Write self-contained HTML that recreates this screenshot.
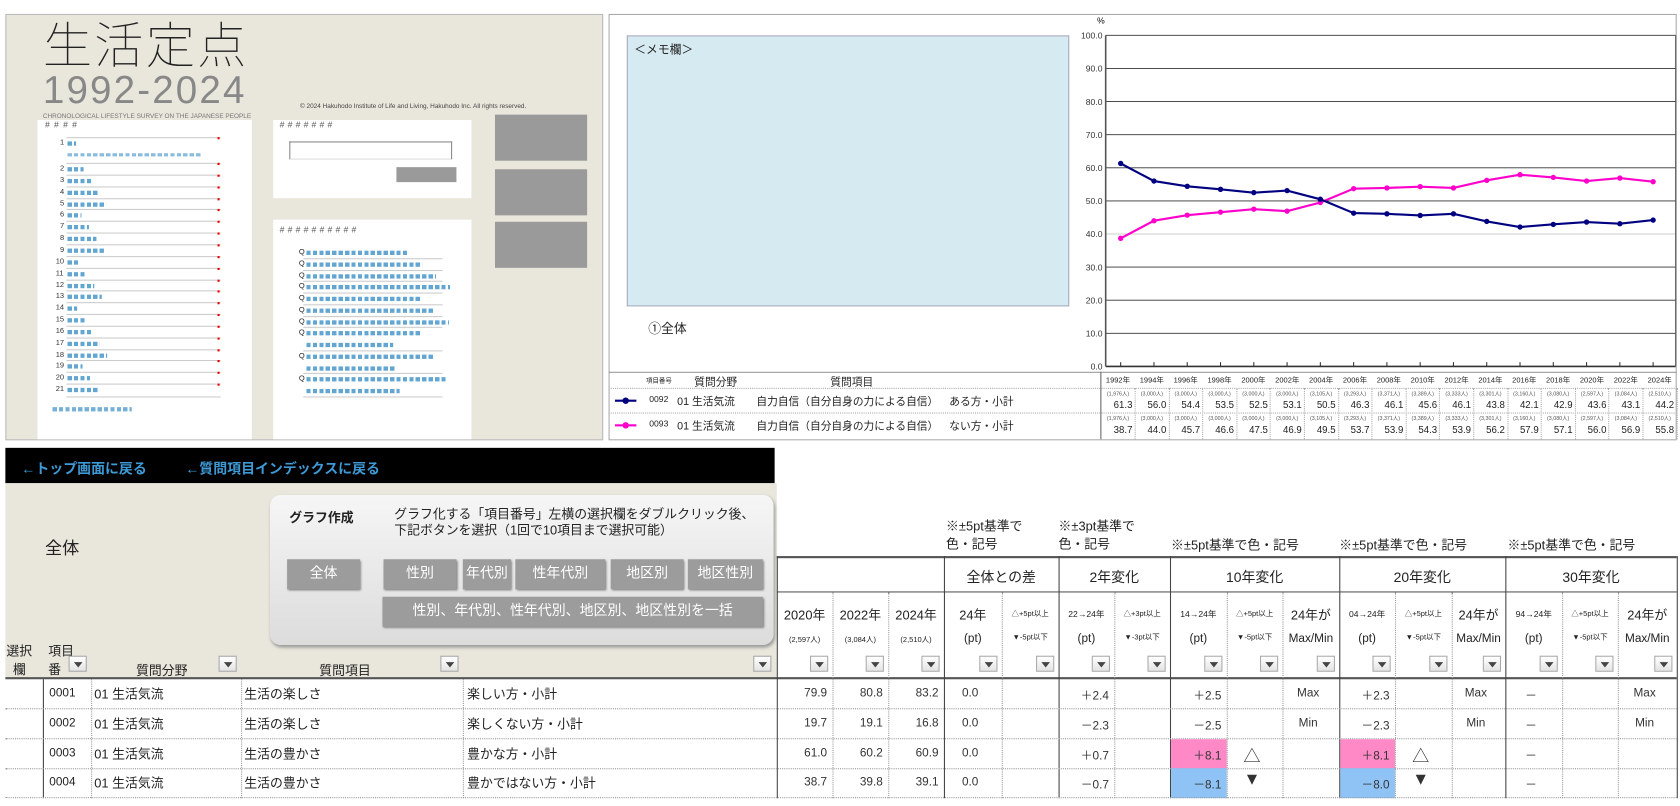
<!DOCTYPE html>
<html><head><meta charset="utf-8">
<style>
*{margin:0;padding:0;box-sizing:border-box}
html,body{width:1680px;height:806px;overflow:hidden;background:#fff}
body{font-family:"Liberation Sans","Noto Sans CJK JP",sans-serif;color:#222}
#w{position:absolute;left:0;top:0;width:1568px;height:752px;transform:scale(1.0714);transform-origin:0 0}
.a{position:absolute}
.bl{background:repeating-linear-gradient(90deg,#3b8fc7 0 4px,transparent 4px 6px)}
.dd{position:absolute;width:17px;height:15px;border:1px solid #aaa;background:linear-gradient(#fff,#e4e4e4)}
.dd:after{content:"";position:absolute;left:4px;top:5px;border-left:4px solid transparent;border-right:4px solid transparent;border-top:5px solid #444}
.btn{position:absolute;background:#9c9c9c;color:#fff;font-size:13px;text-align:center;line-height:26px;height:28px;box-shadow:1px 1px 2px #777}
.t{position:absolute;font-size:12px;white-space:nowrap}
.sm{font-size:8px}
</style></head><body><div id="w">

<div class="a" style="left:5px;top:13px;width:558px;height:398px;background:#e9e6dc;border:1px solid #bbb"></div>
<div class="a" style="left:40px;top:14px;font-size:46px;font-weight:100;letter-spacing:2px;color:#222;font-family:'Noto Sans CJK JP',sans-serif;line-height:52px">生活定点</div>
<div class="a" style="left:40px;top:64px;font-size:36px;color:#888;letter-spacing:2px;font-weight:100;line-height:40px">1992-2024</div>
<div class="a" style="left:40px;top:106px;font-size:6px;color:#777">CHRONOLOGICAL LIFESTYLE SURVEY ON THE JAPANESE PEOPLE</div>
<div class="a" style="left:280px;top:97px;font-size:6px;color:#444">© 2024 Hakuhodo Institute of Life and Living, Hakuhodo Inc. All rights reserved.</div>
<div class="a" style="left:35px;top:112px;width:200px;height:298px;background:#fff"></div>
<div class="a" style="left:255px;top:112px;width:185px;height:73px;background:#fff"></div>
<div class="a" style="left:270px;top:132px;width:152px;height:17px;border:1px solid #888;border-bottom-color:#ddd;background:#fff"></div>
<div class="a" style="left:370px;top:156px;width:56px;height:14px;background:#9a9a9a"></div>
<div class="a" style="left:255px;top:205px;width:185px;height:205px;background:#fff"></div>
<div class="a" style="left:462px;top:107px;width:86px;height:43px;background:#9a9a9a"></div>
<div class="a" style="left:462px;top:158px;width:86px;height:43px;background:#9a9a9a"></div>
<div class="a" style="left:462px;top:207px;width:86px;height:43px;background:#9a9a9a"></div>
<div class="t sm" style="left:42px;top:112px;color:#555;letter-spacing:4px">####</div>
<div class="t sm" style="left:261px;top:112px;color:#555;letter-spacing:3px">#######</div>
<div class="t sm" style="left:261px;top:210px;color:#555;letter-spacing:3px">##########</div>
<div class="a bl" style="left:49px;top:380px;width:74px;height:4px;opacity:.7"></div>

<div class="a" style="left:568px;top:13px;width:997px;height:398px;background:#fff;border:1px solid #aaa"></div>
<div class="a" style="left:585px;top:33px;width:413px;height:253px;background:#d6eaf1;border:1px solid #aab"></div>
<div class="t" style="left:592px;top:38px;font-size:11px">＜メモ欄＞</div>
<div class="t" style="left:605px;top:298px;font-size:12px">①全体</div>
<div class="a" style="left:568px;top:347px;width:997px;height:1px;background:#999"></div>
<div class="a" style="left:1027px;top:347px;width:1px;height:63px;background:#666"></div>
<div class="t" style="left:603px;top:350px;font-size:6px">項目番号</div>
<div class="t" style="left:648px;top:348px;font-size:10px">質問分野</div>
<div class="t" style="left:775px;top:348px;font-size:10px">質問項目</div>
<div class="a" style="left:568px;top:362px;width:997px;height:1px;border-top:1px dotted #aaa"></div>
<div class="a" style="left:568px;top:385px;width:997px;height:1px;border-top:1px dotted #aaa"></div>
<div class="a" style="left:574px;top:373px;width:20px;height:2px;background:#000080"></div><div class="a" style="left:581px;top:371px;width:6px;height:6px;border-radius:3px;background:#000080"></div>
<div class="a" style="left:574px;top:396px;width:20px;height:2px;background:#ff00cc"></div><div class="a" style="left:581px;top:394px;width:6px;height:6px;border-radius:3px;background:#ff00cc"></div>
<div class="t" style="left:606px;top:368px;font-size:8px">0092</div><div class="t" style="left:632px;top:366px;font-size:10px">01 生活気流</div><div class="t" style="left:706px;top:366px;font-size:10px">自力自信（自分自身の力による自信）</div><div class="t" style="left:886px;top:366px;font-size:10px">ある方・小計</div>
<div class="t" style="left:606px;top:391px;font-size:8px">0093</div><div class="t" style="left:632px;top:389px;font-size:10px">01 生活気流</div><div class="t" style="left:706px;top:389px;font-size:10px">自力自信（自分自身の力による自信）</div><div class="t" style="left:886px;top:389px;font-size:10px">ない方・小計</div>

<div class="a" style="left:5px;top:418px;width:718px;height:33px;background:#000"></div>
<div class="t" style="left:20px;top:427px;font-size:13px;font-weight:bold;color:#3d9ad6">←トップ画面に戻る</div>
<div class="t" style="left:173px;top:427px;font-size:13px;font-weight:bold;color:#3d9ad6">←質問項目インデックスに戻る</div>
<div class="a" style="left:5px;top:451px;width:720px;height:181px;background:#e9e6dc"></div>
<div class="t" style="left:42px;top:498px;font-size:16px">全体</div>
<div class="a" style="left:252px;top:462px;width:470px;height:140px;border-radius:10px;background:linear-gradient(#f6f6f6,#dcdcdc);box-shadow:1px 2px 3px #999"></div>
<div class="t" style="left:270px;top:474px;font-size:12px;font-weight:bold">グラフ作成</div>
<div class="t" style="left:368px;top:473px;font-size:12px;line-height:15px">グラフ化する「項目番号」左横の選択欄をダブルクリック後、<br>下記ボタンを選択（1回で10項目まで選択可能）</div>
<div class="btn" style="left:268px;top:522px;width:68px">全体</div>
<div class="btn" style="left:358px;top:522px;width:68px">性別</div>
<div class="btn" style="left:432px;top:522px;width:45px">年代別</div>
<div class="btn" style="left:481px;top:522px;width:84px">性年代別</div>
<div class="btn" style="left:570px;top:522px;width:68px">地区別</div>
<div class="btn" style="left:642px;top:522px;width:70px">地区性別</div>
<div class="btn" style="left:357px;top:557px;width:355px">性別、年代別、性年代別、地区別、地区性別を一括</div>
<div class="t" style="left:6px;top:600px;font-size:12px;line-height:17px;text-align:center">選択<br>欄</div>
<div class="t" style="left:45px;top:600px;font-size:12px;line-height:17px">項目<br>番</div>
<div class="t" style="left:127px;top:617px;font-size:12px">質問分野</div>
<div class="t" style="left:298px;top:617px;font-size:12px">質問項目</div>
<div class="dd" style="left:64px;top:612px"></div>
<div class="dd" style="left:204px;top:612px"></div>
<div class="dd" style="left:411px;top:612px"></div>
<div class="dd" style="left:703px;top:612px"></div>
<div class="t" style="left:883px;top:483px;font-size:12px;line-height:17px">※±5pt基準で<br>色・記号</div>
<div class="t" style="left:988px;top:483px;font-size:12px;line-height:17px">※±3pt基準で<br>色・記号</div>
<div class="t" style="left:1093px;top:500px;font-size:12px">※±5pt基準で色・記号</div>
<div class="t" style="left:1250px;top:500px;font-size:12px">※±5pt基準で色・記号</div>
<div class="t" style="left:1407px;top:500px;font-size:12px">※±5pt基準で色・記号</div>
</div>
<script>
var W=document.getElementById('w');
function add(h){W.insertAdjacentHTML('beforeend',h)}
var h='';for(var i=0;i<21;i++){var y=i==0?131:155+(i-1)*10.85;h+='<div class="a" style="left:62px;top:'+(y-3)+'px;width:144px;height:1px;background:#ccc"></div><div class="a" style="left:203px;top:'+(y-3)+'px;width:2px;height:2px;background:#e00"></div><div class="t" style="left:'+(i<9?56:52)+'px;top:'+(y-1)+'px;font-size:7px;color:#333">'+(i+1)+'</div><div class="a bl" style="left:63px;top:'+(y+1)+'px;width:'+(8+(i*7)%30)+'px;height:4px;opacity:.8"></div>'}
h+='<div class="a bl" style="left:63px;top:143px;width:125px;height:3px;opacity:.6"></div><div class="a" style="left:62px;top:370px;width:144px;height:1px;background:#ccc"></div>';
var q=[1,1,1,1,1,1,1,2,2,2];var yy=233;for(i=0;i<10;i++){h+='<div class="t" style="left:279px;top:'+(yy-1)+'px;font-size:7px">Q</div>';for(var k=0;k<q[i];k++){h+='<div class="a bl" style="left:286px;top:'+(yy+1+k*10.75)+'px;width:'+(k?60+i*3:95+(i*13)%40)+'px;height:4px;opacity:.8"></div>'}yy+=q[i]*10.75;h+='<div class="a" style="left:283px;top:'+(yy-3)+'px;width:130px;height:1px;background:#ccc"></div>';}
add(h);
var b=[61.3,56.0,54.4,53.5,52.5,53.1,50.5,46.3,46.1,45.6,46.1,43.8,42.1,42.9,43.6,43.1,44.2],p=[38.7,44.0,45.7,46.6,47.5,46.9,49.5,53.7,53.9,54.3,53.9,56.2,57.9,57.1,56.0,56.9,55.8];
var X0=1032,Y0=342,sc=3.09,s='<svg class="a" style="left:0;top:0" width="1568" height="752">';
for(var v=0;v<=100;v+=10){var y=Y0-v*sc;s+='<line x1="'+X0+'" x2="1564" y1="'+y+'" y2="'+y+'" stroke="'+(v==40?'#bbb':'#333')+'" stroke-width="'+(v==0?1.5:0.8)+'"/><text x="'+(X0-3)+'" y="'+(y+3)+'" font-size="8" text-anchor="end" fill="#333">'+v.toFixed(1)+'</text>'}
s+='<line x1="'+X0+'" x2="'+X0+'" y1="'+(Y0-309)+'" y2="'+Y0+'" stroke="#555" stroke-width="1.5"/><line x1="1564" x2="1564" y1="33" y2="342" stroke="#555"/><text x="1024" y="22" font-size="8">%</text>';
function pl(d,c){var pts=d.map(function(v,i){return (1046+i*31.06).toFixed(1)+','+(Y0-v*sc).toFixed(1)}).join(' ');var r='<polyline points="'+pts+'" fill="none" stroke="'+c+'" stroke-width="2"/>';d.forEach(function(v,i){r+='<circle cx="'+(1046+i*31.06)+'" cy="'+(Y0-v*sc)+'" r="2.5" fill="'+c+'"/>'});return r}
s+=pl(p,'#ff00cc')+pl(b,'#000080');
for(i=0;i<17;i++){var x=1046+i*31.06;s+='<line x1="'+x+'" x2="'+x+'" y1="'+(Y0-4)+'" y2="'+Y0+'" stroke="#333"/>'}
s+='</svg>';add(s);
h='';var n=[1976,3000,3000,3000,3000,3000,3105,3293,3371,3389,3333,3301,3160,3080,2597,3084,2510];
for(i=0;i<17;i++){var x=1028+i*31.6;h+='<div class="t" style="left:'+x+'px;top:350px;font-size:7px;width:31px;text-align:center">'+(1992+2*i)+'年</div><div class="t" style="left:'+x+'px;top:364px;font-size:5px;width:31px;text-align:center;color:#555">('+n[i].toLocaleString()+'人)</div><div class="t" style="left:'+x+'px;top:373px;font-size:9px;width:29px;text-align:right">'+b[i].toFixed(1)+'</div><div class="t" style="left:'+x+'px;top:387px;font-size:5px;width:31px;text-align:center;color:#555">('+n[i].toLocaleString()+'人)</div><div class="t" style="left:'+x+'px;top:396px;font-size:9px;width:29px;text-align:right">'+p[i].toFixed(1)+'</div><div class="a" style="left:'+(x+31)+'px;top:362px;width:1px;height:48px;border-left:1px dotted #aaa"></div>'}
add(h);
var cx=[725,777,829,881,935,988,1040,1092,1145,1197,1250,1302,1355,1405,1458,1510,1565];
h='<div class="a" style="left:725px;top:519px;width:840px;height:2px;background:#555"></div><div class="a" style="left:725px;top:552px;width:840px;height:1px;background:#555"></div><div class="a" style="left:5px;top:632px;width:1560px;height:2px;background:#555"></div>';
[725,881,988,1092,1250,1405,1565].forEach(function(x){h+='<div class="a" style="left:'+x+'px;top:519px;width:1px;height:226px;background:#444"></div>'});
for(i=1;i<16;i++){if([3,5,7,10,13].indexOf(i)<0)h+='<div class="a" style="left:'+cx[i]+'px;top:553px;width:1px;height:192px;border-left:1px dotted #999"></div>';}
[[881,988,'全体との差'],[988,1092,'2年変化'],[1092,1250,'10年変化'],[1250,1405,'20年変化'],[1405,1565,'30年変化']].forEach(function(g){h+='<div class="t" style="left:'+g[0]+'px;width:'+(g[1]-g[0])+'px;text-align:center;top:528px;font-size:13px">'+g[2]+'</div>'});
var t1=['2020年','2022年','2024年','24年','△+5pt以上','22→24年','△+3pt以上','14→24年','△+5pt以上','24年が','04→24年','△+5pt以上','24年が','94→24年','△+5pt以上','24年が'];
var t2=['(2,597人)','(3,084人)','(2,510人)','(pt)','▼-5pt以下','(pt)','▼-3pt以下','(pt)','▼-5pt以下','Max/Min','(pt)','▼-5pt以下','Max/Min','(pt)','▼-5pt以下','Max/Min'];
for(i=0;i<16;i++){var w=cx[i+1]-cx[i],big=/^(20|24)/.test(t1[i]);h+='<div class="t" style="left:'+cx[i]+'px;width:'+w+'px;text-align:center;top:'+(big?565:568)+'px;font-size:'+(big?12:(t1[i][0]=='△'?7:8))+'px;overflow:hidden">'+t1[i]+'</div>';var s2=t2[i];h+='<div class="t" style="left:'+cx[i]+'px;width:'+w+'px;text-align:center;top:'+(s2[0]=='('&&s2.length>4?592:590)+'px;font-size:'+(s2=='Max/Min'?11:(s2=='(pt)'?11:7))+'px;overflow:hidden">'+s2+'</div><div class="dd" style="left:'+(cx[i+1]-21)+'px;top:612px"></div>'}
var rows=[['0001','生活の楽しさ','楽しい方・小計','79.9','80.8','83.2','＋2.4','＋2.5','','Max','＋2.3','','Max'],['0002','生活の楽しさ','楽しくない方・小計','19.7','19.1','16.8','－2.3','－2.5','','Min','－2.3','','Min'],['0003','生活の豊かさ','豊かな方・小計','61.0','60.2','60.9','＋0.7','＋8.1','△','','＋8.1','△',''],['0004','生活の豊かさ','豊かではない方・小計','38.7','39.8','39.1','－0.7','－8.1','▼','','－8.0','▼','']];
h+='<div class="a" style="left:40px;top:634px;width:1px;height:111px;background:#444"></div>';
[85,225,432].forEach(function(x){h+='<div class="a" style="left:'+x+'px;top:634px;width:1px;height:111px;border-left:1px dotted #999"></div>'});
rows.forEach(function(r,k){var y=634+k*27.8;
if(k==2){h+='<div class="a" style="left:1093px;top:'+y+'px;width:52px;height:28px;background:#ff88c6"></div><div class="a" style="left:1251px;top:'+y+'px;width:51px;height:28px;background:#ff88c6"></div>'}
if(k==3){h+='<div class="a" style="left:1093px;top:'+y+'px;width:52px;height:28px;background:#8fc3f5"></div><div class="a" style="left:1251px;top:'+y+'px;width:51px;height:28px;background:#8fc3f5"></div>'}
h+='<div class="a" style="left:5px;top:'+(y+27)+'px;width:1560px;height:1px;border-top:1px dotted #999"></div>';
var ty=y+6;h+='<div class="t" style="left:46px;top:'+(ty+1)+'px;font-size:11px">'+r[0]+'</div><div class="t" style="left:88px;top:'+(ty-1)+'px;font-size:12px">01 生活気流</div><div class="t" style="left:228px;top:'+(ty-1)+'px;font-size:12px">'+r[1]+'</div><div class="t" style="left:436px;top:'+(ty-1)+'px;font-size:12px">'+r[2]+'</div>';
function rc(ci,txt,al,fs){h+='<div class="t" style="left:'+cx[ci]+'px;width:'+(cx[ci+1]-cx[ci]-5)+'px;text-align:'+(al||'right')+';top:'+(fs?ty-4:ty+1)+'px;font-size:'+(fs||11)+'px;color:#333">'+txt+'</div>'}
rc(0,r[3]);rc(1,r[4]);rc(2,r[5]);rc(3,'0.0','center');rc(5,r[6]);rc(7,r[7]);rc(8,r[8],'center',16);rc(9,r[9],'center');rc(10,r[10]);rc(11,r[11],'center',16);rc(12,r[12],'center');rc(13,'－','center');rc(15,k<2?['Max','Min'][k]:'','center');
});
add(h);
</script>
</body></html>
